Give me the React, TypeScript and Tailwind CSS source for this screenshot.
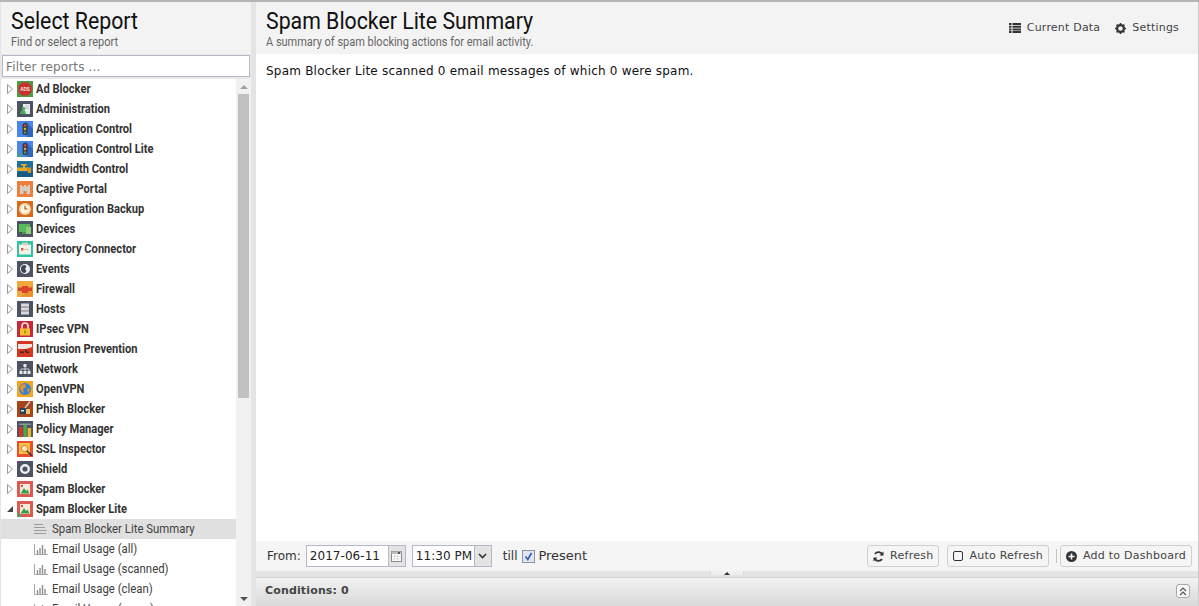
import type { ReactNode } from 'react';

const cond = "font-['Roboto',sans-serif] block origin-left whitespace-nowrap";

const Tile = ({ bg, children }: { bg: string; children: ReactNode }) => (
    <svg width="16" height="16" viewBox="0 0 16 16" className="shrink-0">
        <rect width="16" height="16" fill={bg} />
        {children}
    </svg>
);

const liteBadge = <path d="M0 11 L5 16 H2 L0 14 Z" fill="#3aa76d" />;

const traffic = (
    <>
        <path d="M8 0 L16 8 V16 H10 Z" fill="#2e66c0" />
        <rect x="5.5" y="2" width="5" height="12" rx="2" fill="#3b3b40" />
        <circle cx="8" cy="4.5" r="1.2" fill="#e0483c" />
        <circle cx="8" cy="8" r="1.2" fill="#e8b030" />
        <circle cx="8" cy="11.5" r="1.2" fill="#42a85a" />
    </>
);

const spam = (
    <>
        <rect x="3" y="3" width="10" height="10" fill="#f3e9dc" />
        <path d="M3.5 12.5 L7 7 L9 10 L10.5 8.5 L12.5 12.5 Z" fill="#3d9a4a" />
        <rect x="4" y="4" width="2" height="2" fill="#d64a40" />
    </>
);

const icons: Record<string, ReactNode> = {
    'Ad Blocker': (
        <Tile bg="#4d9a45">
            <path d="M5 1.5 H11 L14.5 5 V11 L11 14.5 H5 L1.5 11 V5 Z" fill="#c9302c" />
            <text x="8" y="9.6" textAnchor="middle" fontSize="4.6" fontWeight="700" fill="#f7e6e6" fontFamily="Liberation Sans">ADS</text>
        </Tile>
    ),
    Administration: (
        <Tile bg="#4e5364">
            <path d="M6 3 H13 V13 H6 Z" fill="#e8ecec" />
            <path d="M8 5 H12 M8 7 H12" stroke="#b8bec0" strokeWidth="0.8" />
            <path d="M3 13 L4.5 9.5 H8 L9 13 Z" fill="#4cae5b" />
            <circle cx="6.5" cy="7.8" r="1.8" fill="#4cae5b" />
        </Tile>
    ),
    'Application Control': <Tile bg="#4a86e8">{traffic}</Tile>,
    'Application Control Lite': (
        <Tile bg="#4a86e8">
            {traffic}
            {liteBadge}
        </Tile>
    ),
    'Bandwidth Control': (
        <Tile bg="#1f6f9f">
            <rect y="11" width="16" height="5" fill="#175a82" />
            <rect y="6.5" width="11" height="3.5" fill="#e8a825" />
            <path d="M10 6.5 H14 V12 H11 V10 H10 Z" fill="#d8941c" />
            <rect x="6" y="3.5" width="2" height="3.5" fill="#e8a825" />
            <rect x="4" y="3" width="6" height="1.5" fill="#e8a825" />
        </Tile>
    ),
    'Captive Portal': (
        <Tile bg="#ee7f3b">
            <path d="M3 13 V4 H5 V5.5 H7 V4 H9 V5.5 H11 V4 H13 V13 H9.5 V10 H6.5 V13 Z" fill="#d6cfc6" />
        </Tile>
    ),
    'Configuration Backup': (
        <Tile bg="#d9691c">
            <circle cx="8" cy="8" r="6" fill="#f4d9a8" />
            <circle cx="8" cy="8" r="4" fill="#fff6e4" />
            <path d="M8 5 V8 H10.5" stroke="#b34a14" strokeWidth="1.2" fill="none" />
        </Tile>
    ),
    Devices: (
        <Tile bg="#4e5364">
            <rect x="2" y="3" width="11" height="8" fill="#5cb85c" />
            <rect x="9" y="6" width="5" height="7" fill="#8ed07a" />
            <rect x="5" y="11" width="4" height="2" fill="#3f9c4a" />
        </Tile>
    ),
    'Directory Connector': (
        <Tile bg="#2ec4a6">
            <rect x="2" y="3.5" width="12" height="10" fill="#f6f1e6" />
            <rect x="5" y="1.5" width="6" height="2.5" fill="#d8cfc0" />
            <rect x="4" y="7" width="2.5" height="2.5" fill="#e0603c" />
            <rect x="7.5" y="8" width="4" height="1" fill="#c9c0b0" />
        </Tile>
    ),
    Events: (
        <Tile bg="#4e5364">
            <circle cx="8" cy="8" r="5" fill="#f0f0f0" />
            <path d="M8 4 A4 4 0 0 0 8 12 L9.5 10 L8 8 L9.5 5.5 Z" fill="#3f4454" />
        </Tile>
    ),
    Firewall: (
        <Tile bg="#f0a83c">
            <path d="M16 4 V16 H4 Z" fill="#e8912e" />
            <rect x="1" y="6.5" width="14" height="3.5" fill="#d8432c" />
            <rect x="5" y="5" width="6" height="7" fill="#d8432c" />
        </Tile>
    ),
    Hosts: (
        <Tile bg="#4e5364">
            <rect x="4" y="2.5" width="8" height="3.2" fill="#d9d9d9" />
            <rect x="4" y="6.4" width="8" height="3.2" fill="#d9d9d9" />
            <rect x="4" y="10.3" width="8" height="3.2" fill="#d9d9d9" />
        </Tile>
    ),
    'IPsec VPN': (
        <Tile bg="#c8283e">
            <path d="M5 8 V5 A3 3 0 0 1 11 5 V8" stroke="#f0e8d0" strokeWidth="1.6" fill="none" />
            <rect x="3" y="7.5" width="10" height="7" fill="#f2c12e" />
            <rect x="7.3" y="9.5" width="1.4" height="3" fill="#9c7a10" />
        </Tile>
    ),
    'Intrusion Prevention': (
        <Tile bg="#d6361e">
            <path d="M1 3 H15 V6 L9 8 H1 Z" fill="#efe6e0" />
            <rect x="8" y="8" width="1.5" height="3" fill="#3a2a2a" />
            <rect x="3" y="10.5" width="4" height="1.5" fill="#3a2a2a" />
            <rect x="9" y="10.5" width="3" height="1.5" fill="#3a2a2a" />
        </Tile>
    ),
    Network: (
        <Tile bg="#4e5364">
            <rect x="6.5" y="3" width="3" height="3" fill="#e8e8e8" />
            <rect x="2.5" y="10" width="3" height="3" fill="#e8e8e8" />
            <rect x="6.5" y="10" width="3" height="3" fill="#e8e8e8" />
            <rect x="10.5" y="10" width="3" height="3" fill="#e8e8e8" />
            <path d="M8 6 V10 M4 10 V8 H12 V10" stroke="#e8e8e8" strokeWidth="0.8" fill="none" />
        </Tile>
    ),
    OpenVPN: (
        <Tile bg="#f2a51e">
            <circle cx="8" cy="8" r="6" fill="#3a82d0" />
            <path d="M4 4 L8 3 L9 6 L6 8 L7 12 L5 11 L3 8 Z M10 8 L13 8 L11 12 Z" fill="#e8932a" />
        </Tile>
    ),
    'Phish Blocker': (
        <Tile bg="#a8441c">
            <rect x="3" y="7" width="7" height="6" fill="#26405e" />
            <rect x="9" y="8" width="4" height="5" fill="#e8c96a" />
            <path d="M8 7 L13 0.5" stroke="#c9d2dc" strokeWidth="1.4" />
            <rect x="4" y="9" width="3" height="1.5" fill="#e8e8e8" />
        </Tile>
    ),
    'Policy Manager': (
        <Tile bg="#4e5364">
            <rect x="2" y="6" width="3.5" height="10" fill="#d8362c" />
            <rect x="6.3" y="3" width="3.5" height="13" fill="#4da84a" />
            <rect x="10.6" y="7" width="3.5" height="9" fill="#e8b82c" />
            <rect x="2" y="2.5" width="12" height="1.5" fill="#8f95a3" />
        </Tile>
    ),
    'SSL Inspector': (
        <Tile bg="#ee4b2e">
            <rect x="2" y="2" width="11" height="11" fill="#f4c442" />
            <circle cx="7.5" cy="7.5" r="3.2" fill="#fbe6b0" stroke="#e0703c" />
            <path d="M10 10 L15 15" stroke="#2e2e2e" strokeWidth="1.4" />
        </Tile>
    ),
    Shield: (
        <Tile bg="#4e5364">
            <circle cx="8" cy="8" r="5" fill="#f0f0f0" />
            <circle cx="8" cy="8" r="2.6" fill="#4e5364" />
        </Tile>
    ),
    'Spam Blocker': <Tile bg="#dd5a50">{spam}</Tile>,
    'Spam Blocker Lite': (
        <Tile bg="#dd5a50">
            {spam}
            {liteBadge}
        </Tile>
    ),
};

const apps = Object.keys(icons);

const Arrow = ({ open }: { open?: boolean }) =>
    open ? (
        <svg width="8" height="8" viewBox="0 0 8 8" className="shrink-0">
            <path d="M1 7 H7 V1 Z" fill="#444" />
        </svg>
    ) : (
        <svg width="6" height="10" viewBox="0 0 6 10" className="shrink-0">
            <path d="M0.5 0.5 L5.5 5 L0.5 9.5 Z" fill="#fff" stroke="#9a9a9a" />
        </svg>
    );

const SummaryIcon = () => (
    <svg width="14" height="10" viewBox="0 0 14 10" className="shrink-0">
        <path d="M0 0.5 H9 M0 3.5 H11 M0 6.5 H13 M0 9.5 H12" stroke="#9b9b9b" strokeWidth="1" />
    </svg>
);

const ChartIcon = () => (
    <svg width="14" height="11" viewBox="0 0 14 11" className="shrink-0">
        <path d="M0.5 0 V10.5 H14" stroke="#a8a8a8" fill="none" />
        <path d="M3.5 6 V10 M6 4 V10 M8.5 1 V10 M11 5 V10" stroke="#8f8f8f" strokeWidth="1.4" />
    </svg>
);

const AppRow = ({ name, open }: { name: string; open?: boolean }) => (
    <div className="h-5 flex items-center shrink-0">
        <div className="w-[16px] flex justify-center pl-[2px] pr-[1px]">
            <Arrow open={open} />
        </div>
        {icons[name]}
        <span className={`${cond} scale-x-[0.855] ml-[3px] text-[13px] font-bold text-[#333]`}>{name}</span>
    </div>
);

const SubRow = ({ name, summary }: { name: string; summary?: boolean }) => (
    <div className={`h-5 flex items-center shrink-0 pl-[33px] ${summary ? 'bg-[#e0e0e0]' : ''}`}>
        <div className="w-[18px] flex items-center">{summary ? <SummaryIcon /> : <ChartIcon />}</div>
        <span className={`${cond} scale-x-[0.875] text-[13px] text-[#404040]`}>{name}</span>
    </div>
);

const Btn = ({ icon, label }: { icon: ReactNode; label: string }) => (
    <div className="h-[22px] flex items-center gap-[6px] px-[5px] border border-[#cfcfcf] rounded-[3px] bg-[#f5f5f5] text-[11px] tracking-[0.25px] text-[#444]">
        {icon}
        <span>{label}</span>
    </div>
);

export default function App() {
    return (
        <div className="w-[1199px] h-[606px] flex flex-col overflow-hidden bg-[#e4e4e4] font-['DejaVu_Sans',sans-serif] text-[#222]">
            <div className="h-[2px] shrink-0 bg-[#b5b5b5]" />
            <div className="flex-1 min-h-0 flex">
                <div className="w-[250px] shrink-0 ml-px flex flex-col bg-white">
                    <div className="h-[52px] shrink-0 bg-[#f3f3f3] pl-[10px] pt-[6px]">
                        <div className={`${cond} scale-x-[0.887] text-[24px] leading-[27px] text-[#111]`}>Select Report</div>
                        <div className={`${cond} scale-x-[0.92] text-[12px] leading-[14px] text-[#666]`}>Find or select a report</div>
                    </div>
                    <div className="h-[25px] shrink-0 bg-[#e9e9e9] pt-px pl-px">
                        <div className="h-[22px] w-[248px] bg-white border border-[#b5b8c8] pl-[3px] pt-px flex items-center text-[12px] text-[#777] tracking-[0.15px]">
                            Filter reports ...
                        </div>
                    </div>
                    <div className="flex-1 min-h-0 flex">
                        <div className="flex-1 min-w-0 flex flex-col overflow-hidden">
                            {apps.map(a => (
                                <AppRow key={a} name={a} open={a === 'Spam Blocker Lite'} />
                            ))}
                            <SubRow name="Spam Blocker Lite Summary" summary />
                            <SubRow name="Email Usage (all)" />
                            <SubRow name="Email Usage (scanned)" />
                            <SubRow name="Email Usage (clean)" />
                            <SubRow name="Email Usage (spam)" />
                        </div>
                        <div className="w-[15px] shrink-0 bg-[#f1f1f1] flex flex-col items-center">
                            <div className="h-[15px] shrink-0 flex items-center justify-center">
                                <svg width="8" height="4" viewBox="0 0 8 4"><path d="M0 4 L4 0 L8 4 Z" fill="#a3a3a3" /></svg>
                            </div>
                            <div className="w-[11px] h-[304px] bg-[#c1c1c1]" />
                            <div className="flex-1" />
                            <div className="h-[15px] shrink-0 flex items-center justify-center">
                                <svg width="8" height="4" viewBox="0 0 8 4"><path d="M0 0 L8 0 L4 4 Z" fill="#505050" /></svg>
                            </div>
                        </div>
                    </div>
                </div>
                <div className="w-[5px] shrink-0 bg-[#e4e4e4]" />
                <div className="flex-1 min-w-0 flex flex-col bg-white border-r border-[#cccccc]">
                    <div className="h-[52px] shrink-0 bg-[#f3f3f3] pl-[10px] pr-[19px] pt-[6px] flex justify-between">
                        <div>
                            <div className={`${cond} scale-x-[0.887] text-[24px] leading-[27px] text-[#111]`}>Spam Blocker Lite Summary</div>
                            <div className={`${cond} scale-x-[0.915] text-[12px] leading-[14px] text-[#666]`}>A summary of spam blocking actions for email activity.</div>
                        </div>
                        <div className="flex items-start gap-[15px] pt-[12px] text-[11px] tracking-[0.2px] text-[#444]">
                            <div className="flex items-center gap-[6px]">
                                <svg width="12" height="10" viewBox="0 0 12 10">
                                    <path d="M0 0 H2.5 V2 H0 Z M3.5 0 H12 V2 H3.5 Z M0 2.7 H2.5 V4.7 H0 Z M3.5 2.7 H12 V4.7 H3.5 Z M0 5.4 H2.5 V7.4 H0 Z M3.5 5.4 H12 V7.4 H3.5 Z M0 8 H2.5 V10 H0 Z M3.5 8 H12 V10 H3.5 Z" fill="#333" />
                                </svg>
                                <span>Current Data</span>
                            </div>
                            <div className="flex items-center gap-[6px]">
                                <svg width="11" height="11" viewBox="0 0 11 11">
                                    <circle cx="5.5" cy="5.5" r="3.4" fill="none" stroke="#333" strokeWidth="2.2" />
                                    <path d="M5.5 0 V2 M5.5 9 V11 M0 5.5 H2 M9 5.5 H11 M1.6 1.6 L3 3 M8 8 L9.4 9.4 M1.6 9.4 L3 8 M8 3 L9.4 1.6" stroke="#333" strokeWidth="1.6" />
                                </svg>
                                <span>Settings</span>
                            </div>
                        </div>
                    </div>
                    <div className="flex-1 min-h-0 pl-[10px] pt-[10px] text-[12px] leading-[14px] tracking-[0.21px] text-[#111]">
                        Spam Blocker Lite scanned 0 email messages of which 0 were spam.
                    </div>
                    <div className="h-[30px] shrink-0 bg-[#f5f5f5] flex items-center pl-[11px] pr-[6px] text-[#333]">
                        <span className="text-[12px] mr-[5px]">From:</span>
                        <div className="h-[22px] w-[100px] bg-white border border-[#b5b8c8] flex items-center">
                            <span className="flex-1 pl-[3px] text-[12px] tracking-[0.05px] text-[#222]">2017-06-11</span>
                            <div className="w-[17px] h-full bg-[#e3e3e3] border-l border-[#b5b8c8] flex items-center justify-center">
                                <svg width="11" height="11" viewBox="0 0 11 11">
                                    <rect x="0.5" y="0.5" width="10" height="10" fill="#fff" stroke="#8a8a8a" />
                                    <rect x="0.5" y="0.5" width="10" height="2.5" fill="#bdbdbd" />
                                    <path d="M3.5 3 V10 M6.5 3 V10 M1 5.5 H10 M1 8 H10" stroke="#d4d4d4" strokeWidth="0.6" />
                                    <rect x="7" y="1" width="2" height="2" fill="#555" />
                                </svg>
                            </div>
                        </div>
                        <div className="ml-[6px] h-[22px] w-[80px] bg-white border border-[#b5b8c8] flex items-center overflow-hidden">
                            <span className="flex-1 min-w-0 pl-[3px] mr-[2px] text-[12px] tracking-[0.05px] text-[#222] whitespace-nowrap overflow-hidden">11:30 PM</span>
                            <div className="w-[17px] shrink-0 h-full bg-[#e3e3e3] border-l border-[#b5b8c8] flex items-center justify-center">
                                <svg width="9" height="6" viewBox="0 0 9 6"><path d="M1 1 L4.5 4.5 L8 1" stroke="#333" strokeWidth="1.6" fill="none" /></svg>
                            </div>
                        </div>
                        <span className="ml-[11px] text-[12px]">till</span>
                        <div className="ml-[4px] w-[13px] h-[13px] bg-[#dfe6f2] border border-[#8d94a3] flex items-center justify-center">
                            <svg width="9" height="9" viewBox="0 0 9 9"><path d="M1.5 4.5 L3.8 7.5 L7.5 1" stroke="#3b5fb0" strokeWidth="1.7" fill="none" /></svg>
                        </div>
                        <span className="ml-[4px] text-[13px] tracking-[-0.05px]">Present</span>
                        <div className="flex-1" />
                        <Btn
                            label="Refresh"
                            icon={
                                <svg width="11" height="11" viewBox="0 0 11 11">
                                    <path d="M9.5 4 A4.2 4.2 0 0 0 2 3 M1.5 7 A4.2 4.2 0 0 0 9 8" stroke="#333" strokeWidth="1.8" fill="none" />
                                    <path d="M10.5 0.5 V4.5 H6.5 Z M0.5 10.5 V6.5 H4.5 Z" fill="#333" />
                                </svg>
                            }
                        />
                        <div className="w-[8px]" />
                        <Btn
                            label="Auto Refresh"
                            icon={
                                <svg width="10" height="10" viewBox="0 0 10 10">
                                    <rect x="0.5" y="0.5" width="9" height="9" rx="1.5" fill="none" stroke="#333" />
                                </svg>
                            }
                        />
                        <div className="w-px h-[14px] bg-[#c8c4b4] ml-[7px] mr-[3px]" />
                        <Btn
                            label="Add to Dashboard"
                            icon={
                                <svg width="11" height="11" viewBox="0 0 11 11">
                                    <circle cx="5.5" cy="5.5" r="5.5" fill="#333" />
                                    <path d="M5.5 2.5 V8.5 M2.5 5.5 H8.5" stroke="#f5f5f5" strokeWidth="1.6" />
                                </svg>
                            }
                        />
                    </div>
                    <div className="h-[6px] shrink-0 bg-[#e4e4e4] flex justify-center">
                        <div className="w-[34px] h-[4px] bg-[#efefef] border-x border-[#d8d8d8] flex justify-center pt-px">
                            <svg width="6" height="3" viewBox="0 0 6 3"><path d="M0 3 L3 0 L6 3 Z" fill="#333" /></svg>
                        </div>
                    </div>
                    <div className="h-[29px] shrink-0 border-t border-[#d4d4d4] bg-gradient-to-b from-[#f2f2f2] to-[#d9d9d9] flex items-center justify-between pl-[9px] pr-[8px] pb-[2px]">
                        <span className="text-[11px] font-bold tracking-[0.15px] text-[#444]">Conditions: 0</span>
                        <div className="w-[14px] h-[14px] rounded-[3px] border border-[#a8a8a8] bg-[#f8f8f8] flex items-center justify-center">
                            <svg width="8" height="9" viewBox="0 0 8 9"><path d="M1 4 L4 1 L7 4 M1 8 L4 5 L7 8" stroke="#555" strokeWidth="1.2" fill="none" /></svg>
                        </div>
                    </div>
                </div>
            </div>
        </div>
    );
}
